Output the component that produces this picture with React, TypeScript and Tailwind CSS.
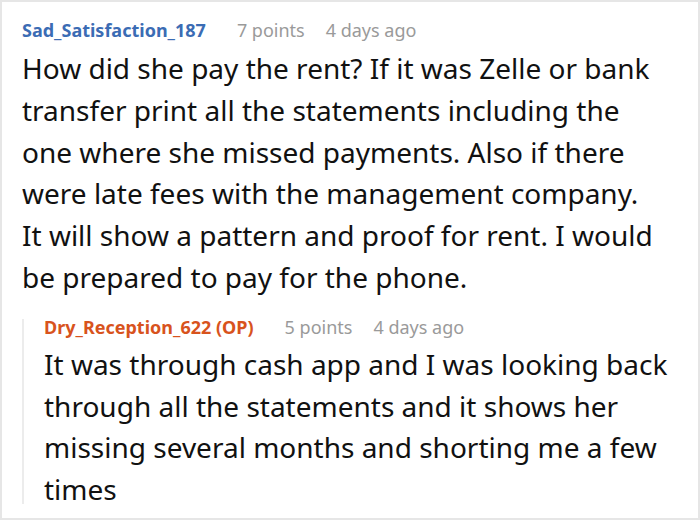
const font = { fontFamily: '"Noto Sans", "Open Sans", sans-serif' };

type HeaderProps = {
  author: string;
  authorColor: string;
  points: string;
  age: string;
};

function CommentHeader({ author, authorColor, points, age }: HeaderProps) {
  return (
    <div className="flex items-center h-[24px] leading-[24px] text-[18px] whitespace-nowrap">
      <span className={`font-bold ${authorColor}`}>{author}</span>
      <span className="ml-[31px] text-[#9a9a9a]">{points}</span>
      <span className="ml-[21px] text-[#9a9a9a]">{age}</span>
    </div>
  );
}

export default function App() {
  return (
    <div
      className="w-[700px] h-[520px] bg-white border-2 border-[#e6e6e6] text-[#111] overflow-hidden"
      style={font}
    >
      <div className="pt-[16px] pl-[20px] pr-[4px]">
        <CommentHeader
          author="Sad_Satisfaction_187"
          authorColor="text-[#3b6cb4]"
          points="7 points"
          age="4 days ago"
        />
        <p className="mt-[6px] text-[28px] leading-[41.8px] whitespace-nowrap">
          How did she pay the rent? If it was Zelle or bank
          <br />
          transfer print all the statements including the
          <br />
          one where she missed payments. Also if there
          <br />
          were late fees with the management company.
          <br />
          It will show a pattern and proof for rent. I would
          <br />
          be prepared to pay for the phone.
        </p>

        {/* Reply */}
        <div className="mt-[16px] flex">
          <div className="w-[2px] mt-[4px] mb-[7px] bg-[#ececec]" />
          <div className="pl-[20px]">
            <CommentHeader
              author="Dry_Reception_622 (OP)"
              authorColor="text-[#d8531d]"
              points="5 points"
              age="4 days ago"
            />
            <p className="mt-[5px] text-[28px] leading-[41.8px] whitespace-nowrap">
              It was through cash app and I was looking back
              <br />
              through all the statements and it shows her
              <br />
              missing several months and shorting me a few
              <br />
              times
            </p>
          </div>
        </div>
      </div>
    </div>
  );
}
